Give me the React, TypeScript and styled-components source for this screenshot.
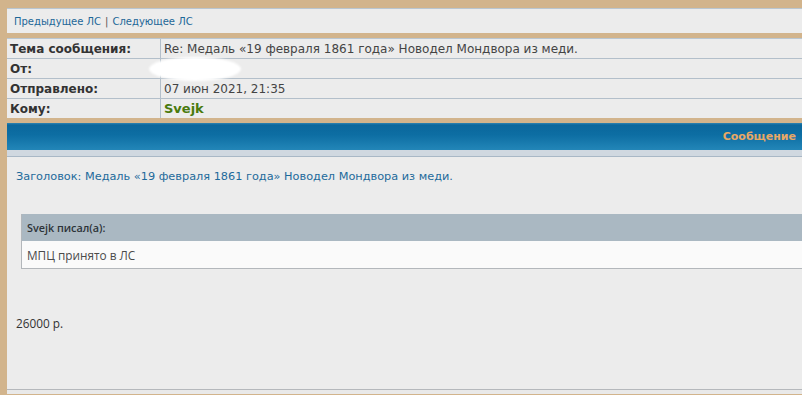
import React from 'react'
import styled, { createGlobalStyle } from 'styled-components'

const GlobalStyle = createGlobalStyle`
  html, body {
    margin: 0;
    padding: 0;
    background: #d2b48c;
    overflow: hidden;
  }
  body {
    font-family: "DejaVu Sans", Verdana, sans-serif;
  }
`

const Page = styled.div`
  width: 820px;
  padding: 8px 0 0 7px;
  display: flex;
  flex-direction: column;
`

const NavPanel = styled.div`
  height: 24px;
  background: #ececec;
  border-top: 1px solid #b9c6d1;
  display: flex;
  align-items: center;
  padding-left: 7px;
  font-size: 10px;
  color: #1f6a9a;
`

const NavLink = styled.span`
  color: #1d6798;
`

const Sep = styled.span`
  margin: 0 4px;
  color: #555;
`

const InfoTable = styled.div`
  margin-top: 5px;
  display: grid;
  grid-template-columns: 154px 1fr;
  background: #ececec;
  border-top: 1px solid #b9c6d1;
`

const Label = styled.div<{ $last?: boolean }>`
  height: 19px;
  border-bottom: ${p => (p.$last ? 'none' : '1px solid #b3bfca')};
  border-right: 1px solid #b3bfca;
  display: flex;
  align-items: center;
  padding-left: 3px;
  font-size: 12px;
  font-weight: bold;
  color: #333;
`

const Value = styled.div<{ $last?: boolean }>`
  position: relative;
  height: 19px;
  border-bottom: ${p => (p.$last ? 'none' : '1px solid #b3bfca')};
  display: flex;
  align-items: center;
  padding-left: 3px;
  font-size: 12px;
  color: #444;
`

const Recipient = styled.span`
  font-size: 13px;
  font-weight: bold;
  color: #4a7a0c;
`

const Blot = styled.span`
  position: absolute;
  left: -12px;
  top: -2px;
  width: 92px;
  height: 24px;
  border-radius: 50%;
  background: #ffffff;
  filter: blur(1px);
`

const MessagePanel = styled.div`
  margin-top: 5px;
  display: flex;
  flex-direction: column;
  background: #ececec;
`

const Header = styled.div`
  height: 27px;
  background: linear-gradient(#2f84b3 0px, #0a679c 2px, #0d6ea3 12px, #2386b8 27px);
  display: flex;
  align-items: center;
  justify-content: flex-end;
  padding-right: 31px;
  font-size: 11px;
  font-weight: bold;
  color: #e9a865;
`

const SubStrip = styled.div`
  height: 6px;
  background: #d0d8e0;
  border-bottom: 1px solid #a9b8c6;
`

const Content = styled.div`
  height: 220px;
  padding: 12px 0 0 9px;
  display: flex;
  flex-direction: column;
  border-bottom: 1px solid #b5b8bc;
`

const Footer = styled.div`
  height: 4px;
  background: #e9e9e9;
`

const Subject = styled.div`
  font-size: 11.3px;
  color: #1d6a9b;
  line-height: 15px;
`

const Quote = styled.div`
  margin: 30px 0 0 5px;
  border-left: 1px solid #b3b7bb;
  border-bottom: 1px solid #b3b7bb;
  font-family: "Open Sans", "Segoe UI", sans-serif;
`

const QuoteHead = styled.div`
  height: 27px;
  background: #aab8c2;
  display: flex;
  align-items: center;
  padding-left: 5px;
  font-size: 10.8px;
  font-weight: 600;
  color: #2d3338;
`

const QuoteBody = styled.div`
  height: 27px;
  background: #fafafa;
  display: flex;
  align-items: center;
  padding-left: 5px;
  font-size: 11.8px;
  color: #4a4a4a;
`

const Body = styled.div`
  margin-top: 46px;
  font-family: "Open Sans", "Segoe UI", sans-serif;
  font-size: 11.8px;
  color: #333;
`

const rows = [
  { label: 'Тема сообщения:', value: 'Re: Медаль «19 февраля 1861 года» Новодел Мондвора из меди.' },
  { label: 'От:', value: '' },
  { label: 'Отправлено:', value: '07 июн 2021, 21:35' },
]

export default function App() {
  return (
    <>
      <GlobalStyle />
      <Page>
        <NavPanel>
          <NavLink>Предыдущее ЛС</NavLink>
          <Sep>|</Sep>
          <NavLink>Следующее ЛС</NavLink>
        </NavPanel>

        <InfoTable>
          {rows.map((r, i) => (
            <React.Fragment key={i}>
              <Label>{r.label}</Label>
              <Value>
                {r.value}
                {i === 1 && <Blot />}
              </Value>
            </React.Fragment>
          ))}
          <Label $last>Кому:</Label>
          <Value $last>
            <Recipient>Svejk</Recipient>
          </Value>
        </InfoTable>

        <MessagePanel>
          <Header>Сообщение</Header>
          <SubStrip />
          <Content>
            <Subject>Заголовок: Медаль «19 февраля 1861 года» Новодел Мондвора из меди.</Subject>
            <Quote>
              <QuoteHead>Svejk писал(а):</QuoteHead>
              <QuoteBody>МПЦ принято в ЛС</QuoteBody>
            </Quote>
            <Body>26000 р.</Body>
          </Content>
          <Footer />
        </MessagePanel>
      </Page>
    </>
  )
}
